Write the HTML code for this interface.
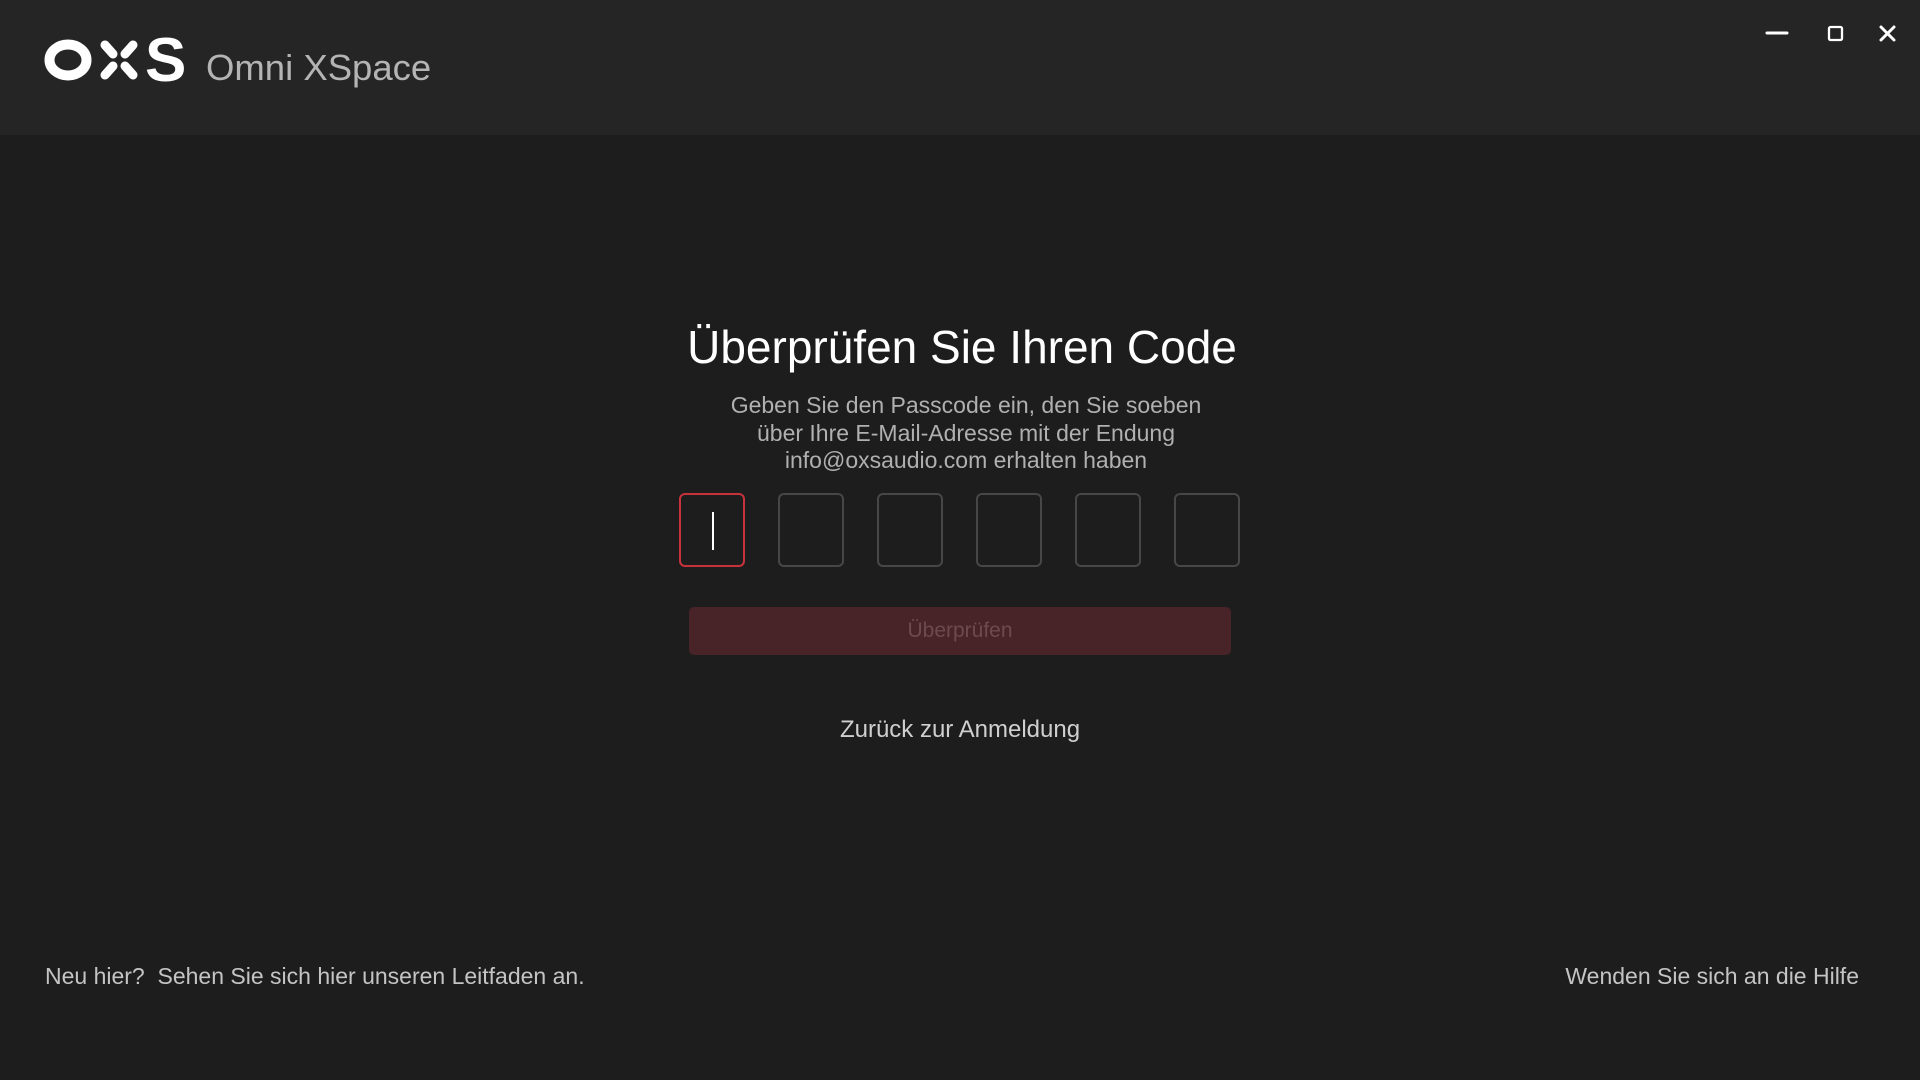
<!DOCTYPE html>
<html><head><meta charset="utf-8"><style>
*{margin:0;padding:0;box-sizing:border-box}
body{width:1920px;height:1080px;background:#1d1d1d;font-family:"Liberation Sans",sans-serif;position:relative;overflow:hidden}
.hdr{position:absolute;left:0;top:0;width:1920px;height:135px;background:#252525}
.omni{position:absolute;left:206px;top:47px;font-size:36.5px;color:#b4b4b4}
.t{position:absolute;left:0;width:1920px;text-align:center}
.title{top:320px;font-size:46px;color:#fff;left:2px}
.sub{top:392px;font-size:23px;line-height:27.5px;color:#b0b0b0;left:6px}
.box{position:absolute;top:493px;width:66px;height:74px;border:2px solid #474747;border-radius:6px}
.btn{position:absolute;left:689px;top:607px;width:542px;height:48px;background:#482327;border-radius:5px;color:#6c4a4e;font-size:21px;text-align:center;line-height:48px}
.back{top:716px;font-size:24px;color:#cfcfcf}
.foot{position:absolute;top:963px;font-size:23px;color:#c4c4c4}
</style></head><body>
<div class="hdr">
<svg style="position:absolute;left:44px;top:36px" width="150" height="48" viewBox="0 0 150 48">
<ellipse cx="24" cy="24" rx="18.5" ry="15.5" fill="none" stroke="#fff" stroke-width="10"/>
<g stroke="#fff" stroke-width="9" stroke-linecap="round">
<line x1="61" y1="9" x2="69" y2="18"/><line x1="89" y1="9" x2="81" y2="18"/>
<line x1="61" y1="39" x2="69" y2="30"/><line x1="89" y1="39" x2="81" y2="30"/>
</g>
<text x="101" y="45" font-family="Liberation Sans" font-weight="bold" font-size="62" fill="#fff">S</text>
</svg>
<div class="omni">Omni XSpace</div>
<svg style="position:absolute;left:1760px;top:20px" width="150" height="30">
<line x1="7" y1="13" x2="27" y2="13" stroke="#fff" stroke-width="3" stroke-linecap="round"/>
<rect x="69" y="7" width="13" height="13" rx="1.5" fill="none" stroke="#fff" stroke-width="2.3"/>
<path d="M121 7 L134 20 M134 7 L121 20" stroke="#fff" stroke-width="3" stroke-linecap="round"/>
</svg>
</div>
<div class="t title">Überprüfen Sie Ihren Code</div>
<div class="t sub">Geben Sie den Passcode ein, den Sie soeben<br>über Ihre E-Mail-Adresse mit der Endung<br>info@oxsaudio.com erhalten haben</div>
<div class="box" style="left:679px;border-color:#c8323c"><div style="position:absolute;left:31px;top:17px;width:2px;height:38px;background:#fff"></div></div>
<div class="box" style="left:778px"></div>
<div class="box" style="left:877px"></div>
<div class="box" style="left:976px"></div>
<div class="box" style="left:1075px"></div>
<div class="box" style="left:1174px"></div>
<div class="btn">Überprüfen</div>
<div class="t back">Zurück zur Anmeldung</div>
<div class="foot" style="left:45px">Neu hier?&nbsp; Sehen Sie sich hier unseren Leitfaden an.</div>
<div class="foot" style="right:61px">Wenden Sie sich an die Hilfe</div>
</body></html>
